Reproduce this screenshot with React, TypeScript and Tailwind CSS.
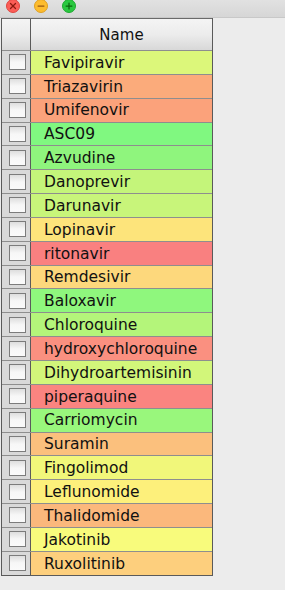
import { X, Minus, Plus } from 'lucide-react';

type Drug = { name: string; color: string };

const drugs: Drug[] = [
  { name: 'Favipiravir', color: 'bg-[#dcf77a]' },
  { name: 'Triazavirin', color: 'bg-[#fbab7b]' },
  { name: 'Umifenovir', color: 'bg-[#fba27b]' },
  { name: 'ASC09', color: 'bg-[#80f880]' },
  { name: 'Azvudine', color: 'bg-[#8ff57d]' },
  { name: 'Danoprevir', color: 'bg-[#c4f57a]' },
  { name: 'Darunavir', color: 'bg-[#c8f57a]' },
  { name: 'Lopinavir', color: 'bg-[#fde47b]' },
  { name: 'ritonavir', color: 'bg-[#f98080]' },
  { name: 'Remdesivir', color: 'bg-[#fdd87c]' },
  { name: 'Baloxavir', color: 'bg-[#8ff77d]' },
  { name: 'Chloroquine', color: 'bg-[#b4f57a]' },
  { name: 'hydroxychloroquine', color: 'bg-[#fa9080]' },
  { name: 'Dihydroartemisinin', color: 'bg-[#d2f67a]' },
  { name: 'piperaquine', color: 'bg-[#fa8480]' },
  { name: 'Carriomycin', color: 'bg-[#99f77c]' },
  { name: 'Suramin', color: 'bg-[#fbc07d]' },
  { name: 'Fingolimod', color: 'bg-[#f1f77a]' },
  { name: 'Leflunomide', color: 'bg-[#fdf07b]' },
  { name: 'Thalidomide', color: 'bg-[#fbb87c]' },
  { name: 'Jakotinib', color: 'bg-[#f8fb7c]' },
  { name: 'Ruxolitinib', color: 'bg-[#fdcf7d]' },
];

const Light = ({ bg, ring, children }: { bg: string; ring: string; children: React.ReactNode }) => (
  <div className={`flex h-[14px] w-[14px] items-center justify-center rounded-full border ${bg} ${ring}`}>
    {children}
  </div>
);

export default function App() {
  return (
    <div className="flex h-[590px] w-[285px] flex-col overflow-hidden bg-[#ececec] font-['DejaVu_Sans',sans-serif]">
      {/* title bar */}
      <div className="-mt-[1px] flex h-[19px] shrink-0 items-start gap-[14px] border-b border-[#c8c8c8] bg-gradient-to-b from-[#e2e2e2] to-[#d6d6d6] pl-[6px]">
        <Light bg="bg-[#fc5e57]" ring="border-[#de4640]">
          <X size={10} strokeWidth={3} className="text-[#8c1a10]" />
        </Light>
        <Light bg="bg-[#fdbc2e]" ring="border-[#dea023]">
          <Minus size={10} strokeWidth={3} className="text-[#985712]" />
        </Light>
        <Light bg="bg-[#2ac840]" ring="border-[#1fa831]">
          <Plus size={10} strokeWidth={3} className="text-[#0b650d]" />
        </Light>
      </div>

      {/* table */}
      <div className="ml-px w-[212px] border border-t-0 border-[#5a5a5a]">
        <div className="flex h-[32px] border-t border-[#6a6a6a] bg-gradient-to-b from-[#f4f4f4] via-[#ececec] to-[#d8d8d8]">
          <div className="w-[29px] border-r border-[#5a5a5a]" />
          <div className="flex flex-1 items-center justify-center pt-[1px] text-[15px] text-[#111]">Name</div>
        </div>
        {drugs.map((d) => (
          <div key={d.name} className="flex h-[23.85px] border-t border-[#8e8e8e]">
            <div className="flex w-[29px] items-center justify-center border-r border-[#5a5a5a] bg-[#d9d9d9] pl-[2px]">
              <div className="h-[16px] w-[17px] border border-[#7c7c7c] bg-gradient-to-b from-[#dedede] via-[#f7f7f7] to-[#fafafa]" />
            </div>
            <div className={`flex flex-1 items-center pl-[13px] pt-[2px] text-[15.5px] text-[#111] ${d.color}`}>{d.name}</div>
          </div>
        ))}
      </div>
    </div>
  );
}
